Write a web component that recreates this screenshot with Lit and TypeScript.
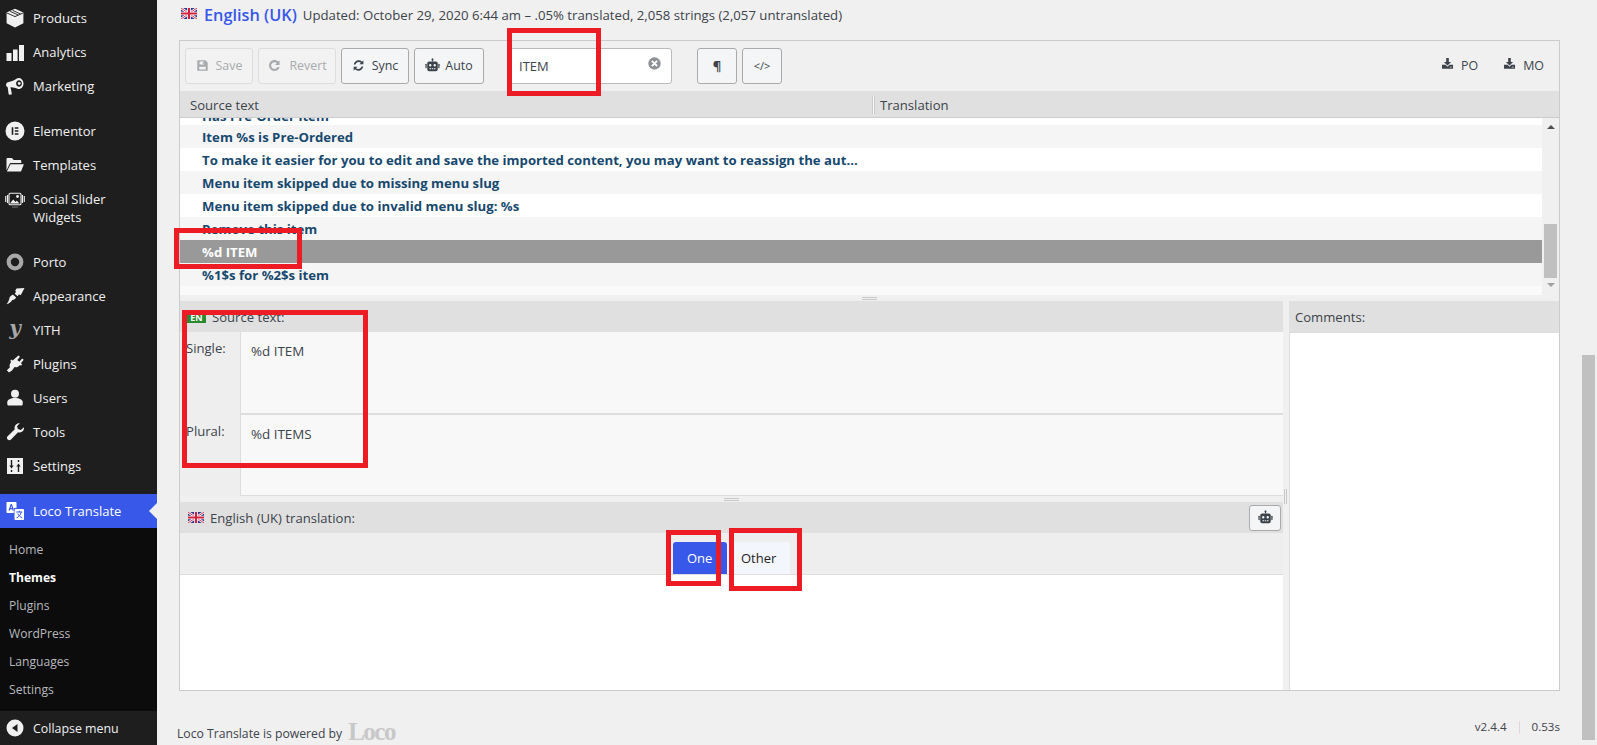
import { LitElement, html, css, svg } from "lit";
import { customElement } from "lit/decorators.js";

const ic = (body: unknown, size = 20, vb = "0 0 20 20") =>
  html`<svg width=${size} height=${size} viewBox=${vb} fill="currentColor">${body}</svg>`;

const flag = () => html`<svg class="flag" width="16" height="11" viewBox="0 0 16 11">
  <rect width="16" height="11" fill="#2b3a8f"/>
  <path d="M0 0L16 11M16 0L0 11" stroke="#fff" stroke-width="2.4"/>
  <path d="M0 0L16 11M16 0L0 11" stroke="#d0213a" stroke-width=".9"/>
  <path d="M8 0V11M0 5.5H16" stroke="#fff" stroke-width="3.6"/>
  <path d="M8 0V11M0 5.5H16" stroke="#d0213a" stroke-width="2"/>
</svg>`;

const robot = (s = 16) => ic(svg`
  <rect x="9.2" y="1" width="1.6" height="3.5"/><circle cx="10" cy="1.8" r="1.3"/>
  <path fill-rule="evenodd" d="M5.5 4.5h9A2.5 2.5 0 0 1 17 7v8a2.5 2.5 0 0 1-2.5 2.5h-9A2.5 2.5 0 0 1 3 15V7a2.5 2.5 0 0 1 2.5-2.5zM7 8a1.6 1.6 0 1 0 0 3.2A1.6 1.6 0 0 0 7 8zm6 0a1.6 1.6 0 1 0 0 3.2A1.6 1.6 0 0 0 13 8zM6 13.5V15h2v-1.5zm3 0V15h2v-1.5zm3 0V15h2v-1.5z"/>
  <rect x=".6" y="7.5" width="1.7" height="6" rx=".8"/><rect x="17.7" y="7.5" width="1.7" height="6" rx=".8"/>`, s);

const icons: Record<string, unknown> = {
  products: ic(svg`<path d="M10 .8l8.4 3.6v10.8L10 19.4 1.6 15.2V4.4z"/><path d="M2 5l8 3.6L18 5M5.2 3.4l8 3.6M7.6 2.4l8 3.6" fill="none" stroke="#1e1e1e" stroke-width=".9"/>`),
  analytics: ic(svg`<rect x="1.5" y="11" width="5" height="8"/><rect x="8" y="7.5" width="4.6" height="11.5"/><rect x="14" y="3" width="5" height="16"/>`),
  marketing: ic(svg`<path fill-rule="evenodd" d="M13.8 2c2.6 0 4.7 2.5 4.7 5.5S16.4 13 13.8 13c-.4 0-.8-.1-1.2-.2C10.600 11.800 8 11 5.500 11.200L6.800 17.500c.1.500-.2 1-.8 1.100l-1.300.2c-.5.100-1-.2-1.100-.7L2.700 11.300C1.600 10.800 1 9.800 1 8.800c0-1.100.8-2.200 2-2.500C6.500 5.500 9.500 4.400 11.800 2.600 12.400 2.200 13.100 2 13.800 2zM14 4.200c-1.600 0-2.900 1.500-2.900 3.300s1.300 3.300 2.900 3.300 2.900-1.500 2.900-3.300-1.300-3.300-2.900-3.300z"/><circle cx="14.200" cy="7.500" r="1.400"/>`),
  elementor: ic(svg`<path fill-rule="evenodd" d="M10 .5a9.500 9.500 0 1 1 0 19 9.500 9.500 0 0 1 0-19zM6.700 6.200v7.600h1.600V6.200zm3.100 0v1.500h3.600V6.200zm0 3v1.500h3.600V9.200zm0 3.100v1.500h3.600v-1.500z"/>`),
  templates: ic(svg`<path d="M1.500 15.500V4.200C1.500 3.500 2 3 2.700 3h4.200l1.800 2h6.400c.7 0 1.200.5 1.200 1.200V8H6.200c-.8 0-1.500.4-1.800 1.200z"/><path d="M5.500 9.200h13.400L16 16.500H1.900z"/>`),
  social: ic(svg`<path fill="none" stroke="currentColor" stroke-width="1.100" d="M5.300 3.300h9.400c.8 0 1.300.5 1.300 1.300v8.800c0 .8-.5 1.300-1.300 1.300H5.300c-.8 0-1.300-.5-1.300-1.300V4.600c0-.8.500-1.300 1.300-1.300zM2.500 5v8M.7 6v6M17.500 5v8M19.300 6v6"/><circle cx="12.500" cy="6.500" r="1.400"/><path d="M5 13.500l3.200-4 2.200 2.500 1.400-1.200 2.700 2.700z"/><circle cx="8" cy="17" r=".5"/><circle cx="10" cy="17" r=".5"/><circle cx="12" cy="17" r=".5"/>`),
  porto: html`<svg width="20" height="20" viewBox="0 0 20 20"><circle cx="10" cy="10" r="6.300" fill="none" stroke="#a8a8a8" stroke-width="4.200"/></svg>`,
  appearance: ic(svg`<path d="M11.500 2.500L19.500 2l-3.800 7.200-1.700-.9-1.300 1.900-3-2.500 1.400-1.900-1-.9z"/><path d="M7.800 8.600l3.400 2.800-1.300 1.500c-1 .9-1.700 1-2.700 1.100-.8 1.400-2.400 3.400-5.700 4.200 1.400-1.500 2.400-3.400 3-6.100.1-1 .4-1.500 1.300-2.200z"/>`),
  yith: html`<svg width="20" height="20" viewBox="0 0 20 20"><text x="10" y="15" text-anchor="middle" class="yith">y</text></svg>`,
  plugins: ic(svg`<path d="M13.400 1.500l1.600 1.300-2.700 3.300 2.100 1.700 2.700-3.300 1.600 1.300-2.800 3.400 1.300 1-1.200 1.500-1-.8c-1.500 1.800-3.500 2.700-5.400 2.200L7 16.400 4 18.500l-2.200-2.300 3-2.800c-.6-1.800-.1-3.800 1.400-5.700l-1-.8 1.200-1.500 1.300 1z"/>`),
  users: ic(svg`<circle cx="10" cy="5.700" r="4"/><path d="M10 10c4.500 0 7.700 1.700 7.700 4.200v2c0 .8-.7 1.300-1.500 1.300H3.800c-.8 0-1.500-.5-1.500-1.300v-2C2.300 11.700 5.500 10 10 10z"/>`),
  tools: ic(svg`<path d="M19 5.300c.2 1.800-.4 3.300-1.700 4.300-1.300 1-2.700 1.200-4.300.7L6 17.500c-.9 1-2.400 1-3.300.1-1-.9-1-2.400-.1-3.300l7.200-7.100c-.5-1.600-.2-3 .8-4.300 1.100-1.200 2.500-1.800 4.200-1.600l-2.800 3 .9 2.800 2.900.8z"/>`),
  settings: ic(svg`<path fill-rule="evenodd" d="M2 2h16v16H2zM5.800 4v5.500H4.300L6.500 12.500l2.200-3H7.200V4zM5.800 14v2h1.400v-2zM12.800 16v-5.500h-1.500l2.200-3 2.200 3h-1.500V16zM12.800 6V4h1.400v2z"/>`),
  loco: ic(svg`<path d="M1.500 1h9.200c.5 0 .8.300.8.800V7H8.800v5H2.300c-.5 0-.8-.3-.8-.8z"/><path fill="#3858e9" d="M5.700 3L3.500 9.500h1.400l.4-1.300h1.900l.4 1.300H9L6.900 3zm.6 1.800l.6 2.200H5.600z"/><rect x="9.500" y="8" width="9.500" height="11" rx=".8"/><path fill="none" stroke="#3858e9" stroke-width="1" d="M11.300 11h6M14.300 9.800V11M16.200 11c-.6 3-2.600 5.200-4.700 6M12.800 12.500c.8 2 2.500 3.600 4.500 4.300"/>`),
  collapse: ic(svg`<path fill-rule="evenodd" d="M10 1.500a8.500 8.500 0 1 1 0 17 8.500 8.500 0 0 1 0-17zM12.500 6L7 10l5.500 4z"/>`),
  save: ic(svg`<path fill-rule="evenodd" d="M2 2h12.500L18 5.500V18H2zM5.500 4v4.500h7V4zM5 12v4h10v-4zm5.500-7.300H12v3h-1.500z"/>`, 13),
  revert: ic(svg`<path d="M16.800 3.200v6h-6l2.400-2.400c-.9-.9-2-1.300-3.200-1.300-2.500 0-4.500 2-4.500 4.500s2 4.500 4.500 4.500c1.900 0 3.500-1.100 4.200-2.800l2.700 1C15.800 15.300 13.100 17.300 10 17.300c-4 0-7.300-3.300-7.300-7.300S6 2.700 10 2.700c2 0 3.800.8 5 2z"/>`, 15),
  sync: ic(svg`<path d="M17.500 2v6h-6l2.300-2.300C12.800 4.700 11.500 4.300 10 4.500 7.800 4.800 6 6.400 5.400 8.500H2.700C3.400 4.900 6.400 2 10 2c2.100 0 4 .8 5.500 2.100zM2.500 18v-6h6l-2.300 2.300c1 1 2.300 1.400 3.800 1.200 2.200-.3 4-1.900 4.600-4h2.700C16.600 15.100 13.600 18 10 18c-2.100 0-4-.8-5.500-2.100z"/>`, 13),
  download: ic(svg`<path d="M8 1.500h4v6h3.500L10 13 4.500 7.500H8z"/><path d="M1.500 12H7l3 3 3-3h5.500v6h-17z"/><rect x="13.500" y="15" width="3" height="1" fill="#f0f0f0"/>`, 13),
  clear: html`<svg width="13" height="13" viewBox="0 0 20 20"><circle cx="10" cy="10" r="9.500" fill="#8c8f94"/><path d="M6 6l8 8M14 6l-8 8" stroke="#fff" stroke-width="3"/></svg>`,
};

const nav: { label: string[]; icon: string; gap?: boolean }[] = [
  { label: ["Products"], icon: "products" },
  { label: ["Analytics"], icon: "analytics" },
  { label: ["Marketing"], icon: "marketing" },
  { label: ["Elementor"], icon: "elementor", gap: true },
  { label: ["Templates"], icon: "templates" },
  { label: ["Social Slider", "Widgets"], icon: "social" },
  { label: ["Porto"], icon: "porto", gap: true },
  { label: ["Appearance"], icon: "appearance" },
  { label: ["YITH"], icon: "yith" },
  { label: ["Plugins"], icon: "plugins" },
  { label: ["Users"], icon: "users" },
  { label: ["Tools"], icon: "tools" },
  { label: ["Settings"], icon: "settings" },
];

const rows = [
  "Has Pre-Order item",
  "Item %s is Pre-Ordered",
  "To make it easier for you to edit and save the imported content, you may want to reassign the aut...",
  "Menu item skipped due to missing menu slug",
  "Menu item skipped due to invalid menu slug: %s",
  "Remove this item",
  "%d ITEM",
  "%1$s for %2$s item",
];

const marks = [
  { x: 507, y: 28, w: 94, h: 68 },
  { x: 174, y: 228, w: 128, h: 41 },
  { x: 182, y: 310, w: 186, h: 158 },
  { x: 666, y: 530, w: 55, h: 56 },
  { x: 729, y: 528, w: 73, h: 63 },
];

@customElement("app-root")
export class AppRoot extends LitElement {
  static styles = css`
    :host { display: grid; grid-template-columns: 157px 1fr 15px; height: 745px; width: 1597px; overflow: hidden; position: relative;
      background: #f0f0f0; color: #3c434a; font-family: "Open Sans", "Liberation Sans", sans-serif; font-size: 13.1px; }
    svg { display: block; flex: none; }
    .side { background: #1e1e1e; color: #f0f0f1; display: flex; flex-direction: column; font-size: 13px; padding-top: 1px; height: 744px; }
    .item { display: flex; align-items: center; gap: 8px; padding-left: 5px; min-height: 34px; flex: none; }
    .item.two { height: 52px; align-items: center; }
    .item.two .lbl { line-height: 18px; }
    .item.two svg { margin-top: -16px; }
    .gap { margin-top: 11px; }
    .yith { font: italic bold 20px "DejaVu Serif", serif; fill: #a8a8a8; }
    .active { background: #3858e9; color: #fff; position: relative; }
    .active::after { content: ""; position: absolute; right: 0; top: 9px; border: 8px solid transparent; border-left-width: 0; border-right-color: #f0f0f0; }
    .sub { background: #0c0c0c; padding: 8px 0 7px 9px; color: #b7b9bc; font-size: 12.100px; flex: none; }
    .sub div { height: 28px; line-height: 28px; }
    .sub .cur { color: #fff; font-weight: 700; }
    .collapse { margin-top: auto; font-size: 12.400px; }
    .main { padding-left: 20px; min-width: 0; display: flex; flex-direction: column; }
    .title { height: 40px; box-sizing: border-box; display: flex; align-items: center; padding: 0 0 10px 4px; gap: 7px; font-size: 13.200px; flex: none; }
    .title .flag { margin-top: -3px; }
    .title .name { font-size: 16.300px; color: #3858e9; margin-right: -1px; font-weight: 600; }
    .panel { margin-left: 2px; width: 1381px; height: 651px; box-sizing: border-box; border: 1px solid #ccc; display: flex; flex-direction: column; flex: none; }
    .toolbar { height: 50px; display: flex; align-items: center; padding: 0 0 0 5px; flex: none; font-size: 12.400px; }
    .btn { height: 36px; box-sizing: border-box; border: 1px solid #aaa; border-radius: 3px; background: #f3f5f6; display: flex; align-items: center; justify-content: center; gap: 7px; color: #3c434a; padding-bottom: 1px; }
    .btn.off { border-color: #ddd; color: #a7aaad; background: #f2f2f2; }
    .b-save { width: 68px; margin-right: 5px; }
    .b-revert { width: 78px; margin-right: 5px; }
    .b-sync { width: 68px; margin-right: 5px; }
    .b-auto { width: 70px; margin-right: 26px; gap: 5px; }
    .search { width: 162px; height: 36px; box-sizing: border-box; background: #fff; border: 1px solid #bbb; border-radius: 3px; display: flex; align-items: center; justify-content: space-between; padding: 0 10px 6px 8px; margin-right: 25px; font-size: 13px; }
    .search span { padding-top: 5px; }
    .b-sq { width: 40px; margin-right: 5px; font-weight: 700; font-size: 13px; }
    .b-code { font-weight: 400; font-size: 11px; margin-right: 0; }
    .dl { margin-left: auto; display: flex; gap: 25px; padding: 0 15px 1px 0; }
    .dl div { display: flex; align-items: center; gap: 7px; }
    .dl svg { margin-top: -5px; }
    .lhead { height: 27px; box-sizing: border-box; background: #e0e0e0; border-bottom: 1px solid #ccc; display: flex; align-items: center; flex: none; padding-top: 1px; }
    .lhead .a { width: 692px; padding-left: 10px; box-sizing: border-box; }
    .lhead .div { width: 3px; height: 18px; border-left: 1px solid #c8c8c8; border-right: 1px solid #c8c8c8; box-sizing: border-box; background: #fff; margin-right: 5px; }
    .list { height: 177px; display: flex; flex: none; overflow: hidden; }
    .rows { width: 1362px; flex: none; background: #fafafa; }
    .row { height: 23px; line-height: 25px; padding-left: 22px; font-weight: 700; color: #17496f; font-size: 13.200px; background: #f5f5f5; white-space: nowrap; overflow: hidden; }
    .row.w { background: #fff; }
    .row.first { margin-top: -16px; line-height: 29px; }
    .row.sel { background: #999; color: #fff; }
    .sb { flex: 1; display: flex; flex-direction: column; align-items: center; color: #505050; }
    .sb .up { margin-top: 7px; border: 4px solid transparent; border-top: 0; border-bottom: 4px solid #505050; width: 0; }
    .sb .thumb { width: 13px; height: 54px; background: #c0c0c0; margin-top: 95px; }
    .sb .dn { margin-top: 5px; border: 4px solid transparent; border-bottom: 0; border-top: 4px solid #a0a0a0; width: 0; }
    .split { height: 6px; flex: none; display: flex; align-items: center; justify-content: center; }
    .split i { width: 15px; height: 1px; border-top: 1px solid #c8c8c8; border-bottom: 1px solid #c8c8c8; }
    .bottom { flex: 1; display: flex; gap: 6px; min-height: 0; position: relative; }
    .left { width: 1103px; flex: none; display: flex; flex-direction: column; background: #eee; }
    .phead { height: 31px; flex: none; background: #e0e0e0; display: flex; align-items: center; padding-left: 7px; gap: 6px; position: relative; }
    .en { width: 19px; height: 10px; background: #2a8a30; color: #fff; font-size: 9px; font-weight: 700; line-height: 10px; text-align: center; margin-top: 3px; }
    .phead .flag { margin-left: 1px; }
    .src { display: grid; grid-template-columns: 60px 1fr; background: #eee; flex: none; }
    .src .l { padding: 6px 0 0 6px; line-height: 20px; }
    .src .v { background: #f8f8f8; border-left: 1px solid #ddd; box-sizing: border-box; padding: 9px 0 0 10px; line-height: 20px; font-size: 13.400px; }
    .v1 { height: 83px; border-bottom: 2px solid #ddd; }
    .v2 { height: 81px; border-bottom: 1px solid #ddd; }
    .s2 { background: #f0f0f0; }
    .hg { position: absolute; left: 1104px; top: 188px; width: 1px; height: 15px; border-left: 1px solid #c8c8c8; border-right: 1px solid #c8c8c8; }
    .robot { margin-left: auto; margin-right: 2px; width: 32px; height: 26px; padding: 0; gap: 0; }
    .tabs { height: 41px; display: flex; justify-content: center; align-items: flex-end; flex: none; }
    .tab { height: 32px; display: flex; align-items: center; border-radius: 3px 3px 0 0; font-size: 13px; }
    .tab.on { width: 54px; background: #3858e9; color: #fff; padding-left: 14px; box-sizing: border-box; }
    .tab.off { width: 63px; background: #f3f6fc; color: #1e1e1e; padding-left: 14px; box-sizing: border-box; }
    .area { flex: 1; background: #fff; border-top: 1px solid #ddd; }
    .right { flex: 1; display: flex; flex-direction: column; }
    .right .phead { padding-left: 6px; border-left: 0; }
    .right .body { flex: 1; background: #fff; border: 1px solid #ddd; border-bottom: 0; border-right: 0; }
    .foot { display: flex; justify-content: space-between; width: 1383px; flex: none; font-size: 12.200px; }
    .foot .pw { display: flex; align-items: flex-end; gap: 6px; height: 54px; }
    .foot .pw span { padding-bottom: 3px; }
    .logo { font: bold 25px/27px "Liberation Serif", serif; color: #c8c8c8; letter-spacing: -1.500px; height: 27px; }
    .ver { display: flex; gap: 12px; padding-top: 28px; font-size: 11.600px; }
    .ver i { width: 1px; height: 13px; background: #e2d6d6; margin-top: 2px; }
    .pagebar { padding-top: 355px; }
    .pagebar div { width: 13px; height: 385px; background: #c0c0c0; }
    .mark { position: absolute; box-sizing: border-box; border: 5px solid #ed1c24; pointer-events: none; }
  `;

  render() {
    return html`
      <nav class="side">
        ${nav.map((n) => html`<div class="item ${n.gap ? "gap" : ""} ${n.label.length > 1 ? "two" : ""}">
          ${icons[n.icon]}<div class="lbl">${n.label.map((l, i) => html`${i ? html`<br />` : ""}${l}`)}</div></div>`)}
        <div class="item gap active">${icons.loco}<div class="lbl">Loco Translate</div></div>
        <div class="sub">
          <div>Home</div><div class="cur">Themes</div><div>Plugins</div><div>WordPress</div><div>Languages</div><div>Settings</div>
        </div>
        <div class="item collapse">${icons.collapse}<div class="lbl">Collapse menu</div></div>
      </nav>
      <main class="main">
        <div class="title">${flag()}<span class="name">English (UK)</span>
          <span>Updated: October 29, 2020 6:44 am – .05% translated, 2,058 strings (2,057 untranslated)</span></div>
        <section class="panel">
          <div class="toolbar">
            <div class="btn off b-save">${icons.save}Save</div>
            <div class="btn off b-revert">${icons.revert}Revert</div>
            <div class="btn b-sync">${icons.sync}Sync</div>
            <div class="btn b-auto">${robot(15)}Auto</div>
            <div class="search"><span>ITEM</span>${icons.clear}</div>
            <div class="btn b-sq">¶</div>
            <div class="btn b-sq b-code">&lt;/&gt;</div>
            <div class="dl"><div>${icons.download}PO</div><div>${icons.download}MO</div></div>
          </div>
          <div class="lhead"><div class="a">Source text</div><div class="div"></div><div>Translation</div></div>
          <div class="list">
            <div class="rows">
              ${rows.map((r, i) => html`<div class="row ${i === 0 ? "first w" : ""} ${i === 2 || i === 4 ? "w" : ""} ${i === 6 ? "sel" : ""}">${r}</div>`)}
            </div>
            <div class="sb"><div class="up"></div><div class="thumb"></div><div class="dn"></div></div>
          </div>
          <div class="split"><i></i></div>
          <div class="bottom">
            <div class="left">
              <div class="phead"><span class="en">EN</span><span>Source text:</span></div>
              <div class="src">
                <div class="l">Single:</div><div class="v v1">%d ITEM</div>
                <div class="l">Plural:</div><div class="v v2">%d ITEMS</div>
              </div>
              <div class="split s2"><i></i></div>
              <div class="phead">${flag()}<span>English (UK) translation:</span><div class="btn robot">${robot(15)}</div></div>
              <div class="tabs"><div class="tab on">One</div><div class="tab off">Other</div></div>
              <div class="area"></div>
            </div>
            <div class="right"><div class="phead">Comments:</div><div class="body"></div></div>
            <div class="hg"></div>
          </div>
        </section>
        <footer class="foot">
          <div class="pw"><span>Loco Translate is powered by</span><div class="logo">Loco</div></div>
          <div class="ver"><span>v2.4.4</span><i></i><span>0.53s</span></div>
        </footer>
      </main>
      <div class="pagebar"><div></div></div>
      ${marks.map((m) => html`<div class="mark" style="left:${m.x}px;top:${m.y}px;width:${m.w}px;height:${m.h}px"></div>`)}
    `;
  }
}
